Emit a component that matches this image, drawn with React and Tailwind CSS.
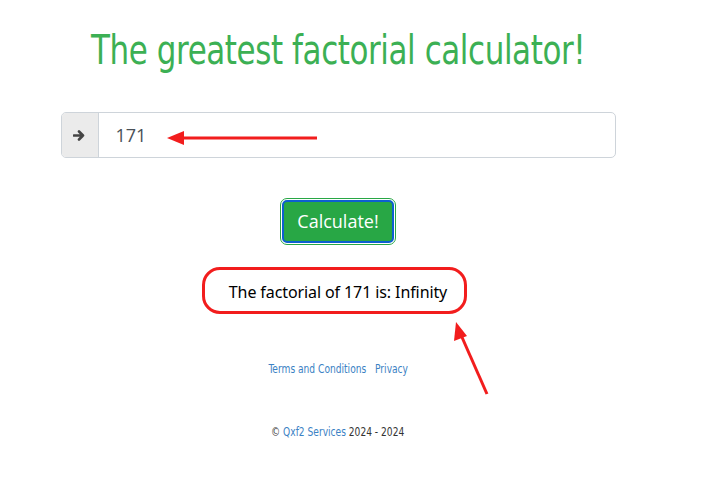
import React from 'react';

const App = () => {
  return (
    <div className="relative w-[701px] h-[479px] bg-white overflow-hidden">
      <div className="w-[676px] flex flex-col items-center">
        {/* Title */}
        <h1 className="mt-[26px] text-[41px] leading-[48px] text-[#3cb054] [font-family:'DejaVu_Sans_Condensed','DejaVu_Sans',sans-serif] font-light tracking-[-0.5px] [transform:scaleX(0.84)]">
          The greatest factorial calculator!
        </h1>

        {/* Input group */}
        <div className="mt-[38px] w-[555px] h-[46px] flex border border-[#ced4da] rounded-[5px] overflow-hidden">
          <div className="w-[37px] flex items-center justify-center bg-[#ebebeb] border-r border-[#ced4da]">
            <svg width="13" height="13" viewBox="0 0 13 13">
              <path d="M1 6.5h9M6 2.5l4 4-4 4" fill="none" stroke="#444" strokeWidth="2.6" strokeLinecap="round" strokeLinejoin="round" />
            </svg>
          </div>
          <div className="flex-1 flex items-center pl-[17px] text-[18px] text-[#495057] [font-family:'Open_Sans',sans-serif]">
            171
          </div>
        </div>

        {/* Button */}
        <button className="mt-[42px] w-[112px] h-[43px] rounded-[5px] bg-[#28a745] text-white text-[18px] [font-family:'Open_Sans',sans-serif] border-[2px] border-[#0d5fd0] outline outline-1 outline-[#28a745] outline-offset-[1px]">
          Calculate!
        </button>

        {/* Result */}
        <div className="mt-[37px] text-[16px] text-black [font-family:'Noto_Sans',sans-serif] tracking-[-0.1px]">
          The factorial of 171 is: Infinity
        </div>

        {/* Links */}
        <div className="mt-[57px] flex gap-[10px] text-[11.5px] text-[#3b82c4] [font-family:'DejaVu_Sans_Condensed',sans-serif] [transform:scaleX(0.88)]">
          <span>Terms and Conditions</span>
          <span>Privacy</span>
        </div>

        {/* Copyright */}
        <div className="mt-[46px] text-[11.5px] text-[#333] [font-family:'DejaVu_Sans_Condensed',sans-serif] [transform:scaleX(0.88)]">
          © <span className="text-[#3b82c4]">Qxf2 Services</span> 2024 - 2024
        </div>
      </div>

      {/* Annotations */}
      <div className="absolute left-[202px] top-[267px] w-[265px] h-[47px] border-[3px] border-[#f21d1d] rounded-[18px]" />
      <svg className="absolute left-0 top-0" width="701" height="479">
        <line x1="317" y1="138" x2="180" y2="138" stroke="#f21d1d" strokeWidth="3" />
        <polygon points="167,138 184,131 184,145" fill="#f21d1d" />
        <line x1="487" y1="394" x2="461" y2="335" stroke="#f21d1d" strokeWidth="3" />
        <polygon points="456,322 467,336 454,341" fill="#f21d1d" />
      </svg>
    </div>
  );
};

export default App;
